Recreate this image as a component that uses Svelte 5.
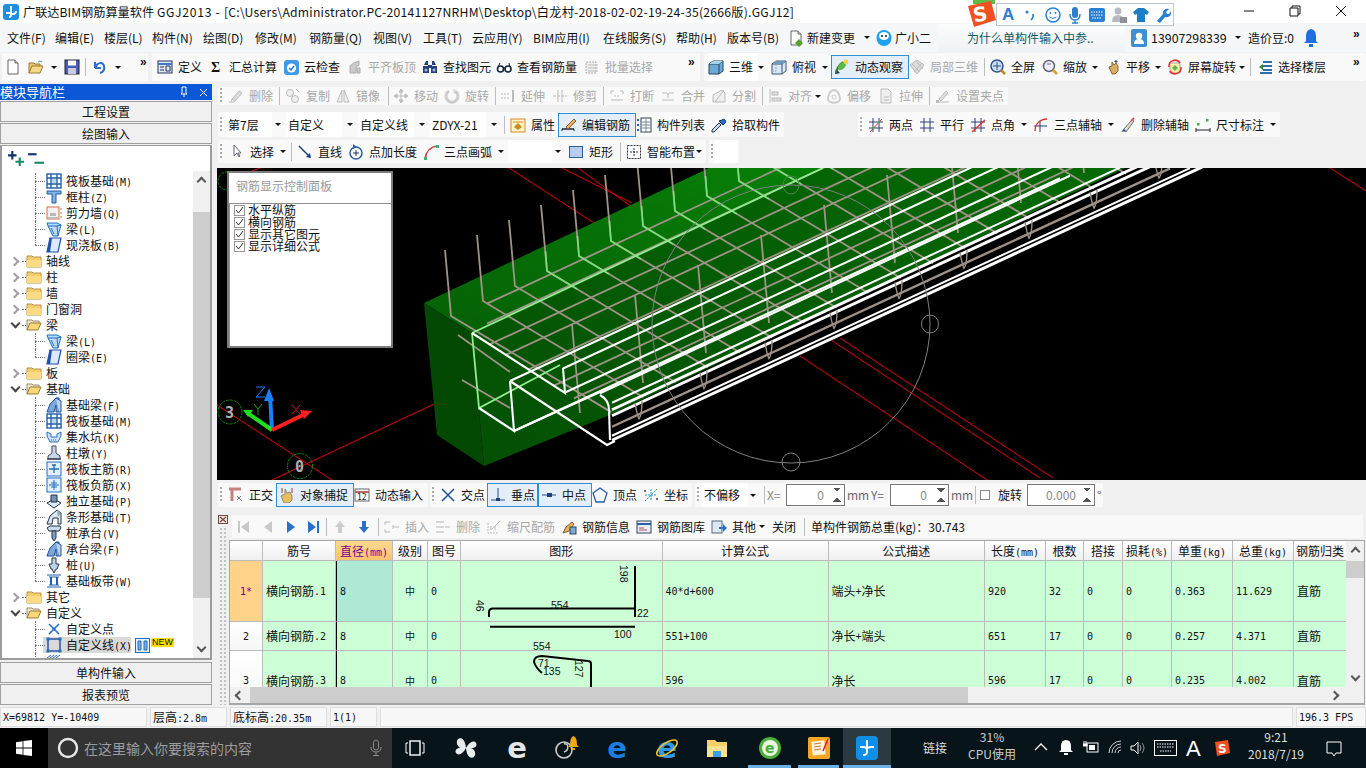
<script>
  const I = {
    new:'<path d="M3 1h7l3 3v11H3z" fill="#fff" stroke="#666"/><path d="M10 1v3h3" fill="#ddd" stroke="#666"/>',
    open:'<path d="M1 14V4h5l1 1h5v2" fill="#e8c46a" stroke="#9a7a30"/><path d="M1 14l3-7h11l-3 7z" fill="#f5d98a" stroke="#9a7a30"/><path d="M10 3q2-2 4 0" fill="none" stroke="#3a7"/>',
    save:'<rect x="1" y="1" width="14" height="14" fill="#4c5fb8" stroke="#223"/><rect x="4" y="1.5" width="8" height="5" fill="#fff"/><rect x="4" y="9" width="8" height="6" fill="#ccd"/>',
    undo:'<path d="M4 3v6M4 9h6M5 8c1-5 7-5 8-1s-1 6-4 7" fill="none" stroke="#2a6fc9" stroke-width="2"/>',
    def:'<rect x="1" y="2" width="14" height="12" fill="#dfe9f5" stroke="#235" /><path d="M1 5h14" stroke="#47c" stroke-width="2"/><path d="M3 8h4M3 11h4M9 7h4v5H9z" stroke="#235" fill="none"/>',
    sum:'<text x="3" y="13" font-size="14" font-weight="700" font-family="Liberation Serif" fill="#111">Σ</text>',
    cloud:'<rect x="1" y="1" width="15" height="15" rx="3" fill="#3d9ae8"/><circle cx="8.5" cy="9" r="4.6" fill="#fff"/><path d="M6 9l2 2 3-4" stroke="#2a7fd0" fill="none" stroke-width="1.5"/>',
    flush:'<path d="M3 14V7l4-3 5-2v4l-3 2v6zM10 9h3v5h-3z" fill="#ccc" stroke="#aaa"/>',
    find:'<path d="M2 6l2-4h2v4zM10 6V2h2l2 4zM1 7h6v7H1zM9 7h6v7H9zM6 6h4v3H6z" fill="#2b3f7a"/><circle cx="4" cy="11" r="1.5" fill="#9bd"/><circle cx="12" cy="11" r="1.5" fill="#9bd"/>',
    glass:'<circle cx="4.5" cy="10" r="3" fill="none" stroke="#123" stroke-width="1.6"/><circle cx="12" cy="10" r="3" fill="none" stroke="#123" stroke-width="1.6"/><path d="M7 9h2.5M2 8l2-4M14 8l-1-4" stroke="#123" fill="none"/>',
    batch:'<path d="M2 3h10v11H2z" fill="#eee" stroke="#aaa" stroke-dasharray="2 1"/><path d="M4 6h10M4 9h10M4 12h10" stroke="#bbb"/>',
    cube:'<path d="M1 5l4-3h10v10l-4 3H1z" fill="#6da9d8" stroke="#245"/><path d="M1 5h10v10M11 5l4-3" fill="none" stroke="#245"/><path d="M1 5h10l4-3H5z" fill="#a9d2ee"/>',
    wire:'<path d="M1 5l4-3h10v10l-4 3H1z" fill="#d6e8f5" stroke="#456"/><path d="M1 5h10v10M11 5l4-3" fill="none" stroke="#456"/><path d="M5 2v10H1" fill="none" stroke="#8ab" stroke-dasharray="2 1"/><path d="M1 5h10l4-3H5z" fill="#6a9cc4"/>',
    orbit:'<path d="M2 15C2 9 5 6 9 3" stroke="#2a7a2a" stroke-width="2" fill="none"/><ellipse cx="8" cy="7" rx="3" ry="5" transform="rotate(45 8 7)" fill="#5cb84a"/><circle cx="12" cy="3" r="2.4" fill="#f1d24a"/><path d="M2 15l4-1-3-3z" fill="#246"/>',
    loc3:'<path d="M8 1l7 5-7 9-7-9z" fill="#ddd" stroke="#bbb"/><path d="M3 5l8 8M7 2l7 8M13 4l-8 9" stroke="#bbb"/>',
    full:'<circle cx="7" cy="7" r="6" fill="#cfe0f5" stroke="#2d4f8f" stroke-width="1.5"/><path d="M7 3v8M3 7h8" stroke="#2d4f8f"/><path d="M11 11l4 4" stroke="#b98a20" stroke-width="2.5"/>',
    zoom:'<circle cx="7" cy="7" r="5.5" fill="#eef" stroke="#667" stroke-width="1.5"/><path d="M11 11l4 4" stroke="#d2a42a" stroke-width="2.5"/><path d="M5 5h4" stroke="#667"/>',
    pan:'<path d="M4 8l3-1V3l2 3 2-2 2 3v5l-3 3H7z" fill="#d9ad64" stroke="#8a6a30"/><path d="M11 1v3M9.5 2.5h3" stroke="#345"/>',
    srot:'<rect x="3" y="4" width="10" height="10" fill="#fbeda7" stroke="#aaa"/><path d="M5 9l3-3 3 3-3 3z" fill="#5cb84a"/><path d="M2 8a6 6 0 0 1 11-4M14 8a6 6 0 0 1-11 4" stroke="#d33" fill="none" stroke-width="1.5"/>',
    layers:'<path d="M2 8l4-3v6z" fill="#2a8a3a"/><path d="M6 3h9M6 7h9M6 11h9M3 14h12" stroke="#2c6fa5" stroke-width="2"/>',
    erase:'<path d="M4 11l7-8 3 2-7 8z" fill="#ddd" stroke="#bbb"/><path d="M1 14h6M4 11l-1 3" stroke="#bbb"/>',
    copy:'<circle cx="5" cy="5" r="3.5" fill="#eee" stroke="#bbb"/><circle cx="10" cy="11" r="3.5" fill="#eee" stroke="#bbb"/><path d="M11 1l3 3" stroke="#bbb"/>',
    mirror:'<path d="M7 2L2 14h5zM9 2l5 12H9z" fill="#eee" stroke="#bbb"/>',
    move:'<path d="M8 1v14M1 8h14M8 1L6 4h4zM8 15l-2-3h4zM1 8l3-2v4zM15 8l-3-2v4z" fill="#bbb" stroke="#bbb"/>',
    rot:'<path d="M5 3a6 6 0 1 0 6 0" fill="none" stroke="#ccc" stroke-width="3"/><path d="M10 1v4h4" fill="none" stroke="#ccc"/>',
    ext:'<path d="M1 6h9M1 10h9" stroke="#bbb" stroke-dasharray="2 1"/><path d="M13 2v12" stroke="#bbb" stroke-width="2"/>',
    trim:'<path d="M1 8h14" stroke="#bbb" stroke-dasharray="3 1"/><path d="M6 2v12M10 2v12" stroke="#bbb"/>',
    brk:'<path d="M2 3h3M11 3h3M2 3v3M14 3v3M2 12h12" stroke="#bbb" fill="none"/><path d="M5 8h6" stroke="#bbb" stroke-dasharray="2 1"/>',
    merge:'<path d="M2 5h5l1 2 1-2h5M2 12h12" stroke="#bbb" fill="none"/><path d="M8 7v3" stroke="#bbb"/>',
    split:'<path d="M2 14V7l9-5 3 3v9z" fill="#eee" stroke="#bbb"/><path d="M4 14l9-12" stroke="#bbb"/>',
    align:'<path d="M3 1v14" stroke="#bbb"/><rect x="5" y="4" width="6" height="3" fill="#ddd" stroke="#bbb"/><rect x="5" y="10" width="9" height="3" fill="#ddd" stroke="#bbb"/>',
    offs:'<path d="M2 11c0-5 3-9 6-9s6 4 6 9-12 5-12 0z" fill="none" stroke="#ccc" stroke-width="2"/><circle cx="8" cy="9" r="2" fill="none" stroke="#ccc"/>',
    str:'<path d="M3 1h7l3 3v11H3z" fill="#eee" stroke="#bbb"/><path d="M6 9h5M6 12h5" stroke="#bbb"/>',
    grip:'<path d="M2 14h12M4 11l7-8 2 2-7 8z" fill="#ddd" stroke="#bbb"/><rect x="1" y="12" width="3" height="3" fill="#bbb"/>',
    attr:'<rect x="1" y="2" width="14" height="13" fill="#fff3c8" stroke="#e08a20"/><path d="M4 10l4-4 4 4-4 3z" fill="#c98a20"/><path d="M3 5h10" stroke="#e08a20"/>',
    edit:'<path d="M1 12h12" stroke="#223" stroke-width="1.5"/><path d="M1 14v-2M13 14v-2" stroke="#223"/><path d="M5 10l8-8 2 2-8 8z" fill="#e8b64c" stroke="#855"/>',
    list:'<path d="M1 2h2v2H1zM1 7h2v2H1zM1 12h2v2H1z" fill="#2a5fa5"/><rect x="5" y="1" width="10" height="14" fill="#fff" stroke="#345"/><path d="M5 5h10M5 8h10M5 11h10M10 1v14" stroke="#789"/>',
    pick:'<path d="M3 15l-2 0 0-2 7-7 2 2z" fill="#cde" stroke="#236"/><path d="M8 4l4 4 2-2c2-2-1-5-3-3z" fill="#2a6fc9" stroke="#134"/>',
    two:'<path d="M1 5h14M1 11h14M5 1v14M11 1v14" stroke="#2d3f7a"/><path d="M2 15L14 2" stroke="#d33"/><circle cx="5" cy="11" r="1.2" fill="#4a4"/><circle cx="11" cy="5" r="1.2" fill="#4a4"/>',
    para:'<path d="M1 5h14M1 11h14M5 1v14M11 1v14" stroke="#2d3f7a"/>',
    ang:'<path d="M1 5h14M1 11h14M5 1v14M11 1v14" stroke="#2d3f7a"/><path d="M2 15L15 3" stroke="#d33" stroke-width="1.5"/>',
    arc3:'<path d="M1 9h13M7 4v11" stroke="#2d3f7a"/><path d="M2 14C2 7 7 2 14 2" fill="none" stroke="#d33" stroke-width="1.4"/>',
    delaux:'<path d="M3 13l9-10 2 1-8 11z" fill="#e8dcc4" stroke="#668"/><path d="M1 15l3-3 2 2z" fill="#2d4f8f"/><path d="M11 4l3-3" stroke="#e55" stroke-width="2"/>',
    dim:'<path d="M1 13h14M1 11v4M15 11v4" stroke="#223"/><rect x="2" y="6" width="2.5" height="2.5" fill="#4a4"/><rect x="11" y="2" width="2.5" height="2.5" fill="#4a4"/>',
    cursor:'<path d="M5 1v11l3-3 2 4 1-1-2-3h3z" fill="#fff" stroke="#667"/>',
    line:'<path d="M2 2l11 11" stroke="#1f3f80" stroke-width="1.5"/><path d="M14 14l-5-1 4-4z" fill="#1f3f80"/>',
    ptlen:'<circle cx="8" cy="9" r="6" fill="none" stroke="#2a5fa5" stroke-width="1.5"/><path d="M8 6v6M5 9h6" stroke="#235"/><path d="M5 0l4 3-4 2z" fill="#2a5fa5"/>',
    arc:'<path d="M2 15C3 8 7 3 14 2" fill="none" stroke="#c44" stroke-width="1.6"/><rect x="1" y="13" width="3" height="3" fill="#4a7"/><rect x="13" y="1" width="3" height="3" fill="#4a7"/>',
    rect:'<rect x="1.5" y="2.5" width="13" height="11" fill="#b5cdee" stroke="#2a5fa5"/>',
    smart:'<rect x="1.5" y="1.5" width="13" height="13" fill="#fff" stroke="#234" stroke-dasharray="2 1"/><path d="M8 4v8M4 8h8" stroke="#234" stroke-dasharray="2 1"/>',
    ortho:'<path d="M1 2h12M4 2v12" stroke="#c98080" stroke-width="3"/><path d="M9 9l5 5M13 9l-4 4" stroke="#778"/>',
    snap:'<path d="M2 9l4-2V2l2 4 3-1 2 4v4l-3 3H5z" fill="#e4c060" stroke="#987"/><path d="M3 1v5M13 1v5" stroke="#a33"/>',
    dyn:'<rect x="1" y="2" width="14" height="12" fill="#fff" stroke="#666"/><path d="M1 5h14" stroke="#b66" stroke-width="2"/><text x="3" y="13" font-size="8" font-family="DejaVu Sans Mono" fill="#222">12</text>',
    cross:'<path d="M2 2l12 12M14 2L2 14" stroke="#1f4f9f" stroke-width="1.5"/>',
    perp:'<path d="M1 13h14M8 1v12" stroke="#2d4f8f"/><rect x="6" y="11" width="4" height="3" fill="#1f3f80"/>',
    mid:'<path d="M1 8h14" stroke="#2d4f8f"/><rect x="6" y="6" width="5" height="4" fill="#1f3f80"/>',
    vert:'<path d="M8 1l7 5-3 9H4L1 6z" fill="#f4f8fe" stroke="#2a5fa5" stroke-width="1.3"/>',
    coord:'<path d="M8 2v12M2 8h12M2 14L14 2" stroke="#2a8fc4" stroke-dasharray="2 1"/><circle cx="2" cy="4" r="1" fill="#345"/><circle cx="14" cy="12" r="1" fill="#345"/>',
    first:'<path d="M3 2h2v12H3zM14 2v12L6 8z" fill="#c8c8c8"/>',
    prev:'<path d="M12 2v12L4 8z" fill="#c8c8c8"/>',
    next:'<path d="M4 2v12l8-6z" fill="#2a6fc9"/>',
    last:'<path d="M2 2v12l8-6zM11 2h2v12h-2z" fill="#2a6fc9"/>',
    up:'<path d="M8 2l5 6h-3v6H6V8H3z" fill="#ccc"/>',
    down:'<path d="M6 2h4v6h3l-5 6-5-6h3z" fill="#2a6fc9"/>',
    ins:'<path d="M1 3h5M1 13h5M1 3v3M1 10v3" stroke="#bbb" fill="none"/><path d="M9 8h6M9 6v4" stroke="#bbb"/>',
    dele:'<path d="M1 3h8M1 8h8M1 13h8" stroke="#ccc" stroke-width="1.5"/><path d="M10 8h5" stroke="#bbb"/>',
    scale:'<path d="M2 4v10h10" stroke="#bbb" fill="none" stroke-dasharray="2 1"/><path d="M5 11L14 2M5 7v4M9 7v4" stroke="#bbb"/>',
    info:'<path d="M2 14l3-6 6-5 2 2-5 7z" fill="#e8b64c" stroke="#855"/><rect x="9" y="8" width="6" height="7" fill="#7aa7dc" stroke="#345"/>',
    lib:'<rect x="1" y="2" width="14" height="12" fill="#e8eef8" stroke="#345"/><path d="M1 5h14" stroke="#2a5fa5" stroke-width="2"/><path d="M3 9h5M3 11h8" stroke="#a55"/>',
    other:'<rect x="1" y="2" width="10" height="12" fill="#dde8f5" stroke="#567"/><path d="M8 8h4V5l4 4-4 4v-3H8z" fill="#2a6fc9"/>',
    plus:'<path d="M5 1v8M1 5h8" stroke="#136" stroke-width="2"/><path d="M12 7v8M8 11h8" stroke="#1a8a6a" stroke-width="2"/>',
    minus:'<path d="M1 4h8" stroke="#136" stroke-width="2"/><path d="M7 12h9" stroke="#1a8a6a" stroke-width="2"/>',
    raft:'<rect x="1" y="1" width="14" height="14" fill="#fff" stroke="#1f5fae" stroke-width="1.4"/><path d="M1 5h14M1 11h14M5 1v14M11 1v14" stroke="#1f5fae" stroke-width="1.4"/><rect x="6" y="6" width="4" height="4" fill="#bcd4ee"/>',
    col:'<path d="M1 2h14v3H10v9H6V5H1z" fill="#7fb2e0" stroke="#1f5fae"/>',
    wall:'<rect x="1" y="2" width="12" height="12" fill="#f2f2f2" stroke="#d9703a"/><path d="M2 12h10v2H2zM4 8h6v3H4z" fill="#bbb"/><path d="M14 4h2M14 8h2M14 12h2" stroke="#d9703a"/>',
    beam:'<path d="M1 2h10l4 2-3 11H7L2 5z" fill="#bcd9f2" stroke="#1f6fbe"/><path d="M2 5h9l4-1M11 5l1 10M5 7l3 6" stroke="#1f6fbe" fill="none"/>',
    slab:'<path d="M4 1h11l-3 14H1z" fill="#dde9f7" stroke="#1f4faf" stroke-width="1.2"/><path d="M1 15l3-14 2 0-2 14z" fill="#1f4faf"/>',
    fbeam:'<path d="M1 15l3-8 6-6h3v14h-3V8l-2 7z" fill="#7ea6d8" stroke="#1f4f9f"/><path d="M10 1l5 3v11h-2" fill="#bcd4ee" stroke="#1f4f9f"/>',
    sump:'<path d="M1 3l4 2v3h6V5l4-2v4l-3 6H4L1 7z" fill="#cfe2f4" stroke="#2a6fc9"/><path d="M5 11h6" stroke="#2a6fc9" stroke-dasharray="1 1"/>',
    pier:'<path d="M6 1h4v7l4 3v3H2v-3l4-3z" fill="#c5d7ea" stroke="#445"/><path d="M1 14h14" stroke="#445" stroke-width="1.5"/>',
    rb1:'<rect x="1" y="1" width="14" height="14" fill="#e4effa" stroke="#1f6fbe"/><path d="M3 8h10M8 4v8M6 4h4" stroke="#1f6fbe" stroke-width="1.3"/>',
    rb2:'<rect x="1" y="1" width="14" height="14" fill="#e4effa" stroke="#1f6fbe"/><path d="M3 8h10M8 3v10M5 6h6M5 10h6" stroke="#1f6fbe"/>',
    iso:'<path d="M1 10l7-4 7 4-7 5z" fill="#dbe7f5" stroke="#234"/><path d="M5 2h6v7H5z" fill="#6f90b8" stroke="#234"/>',
    strip:'<path d="M1 15l3-8 7-6 4 3v11h-3V9H7l-1 6z" fill="#dbe7f5" stroke="#234"/><path d="M11 1l4 3-3 4z" fill="#8aa"/>',
    capb:'<path d="M1 3l3-2h10l1 2-2 3H3z" fill="#ccdcef" stroke="#234"/><path d="M6 6h4v7l-2 3-2-3z" fill="#7aa0cc" stroke="#234"/>',
    pile:'<path d="M6 1h4v6h3l-2 5h-1l-2 4-2-4H5L3 7h3z" fill="#bcd2ea" stroke="#234"/>',
    band:'<path d="M1 2h14M1 14h14M3 4h10M3 12h10" stroke="#1f5fae"/><path d="M5 4v8M11 4v8" stroke="#1f5fae" stroke-width="2"/>',
    cpt:'<path d="M3 3l10 10M13 3L3 13" stroke="#2a6fc9" stroke-width="1.6"/><circle cx="8" cy="8" r="1.6" fill="#2a6fc9"/>',
    cln:'<rect x="2" y="2" width="12" height="12" fill="none" stroke="#1f4f9f" stroke-width="1.4"/><rect x="0.5" y="0.5" width="3" height="3" fill="#1f6fbe"/><rect x="12.5" y="0.5" width="3" height="3" fill="#1f6fbe"/><rect x="0.5" y="12.5" width="3" height="3" fill="#1f6fbe"/><rect x="12.5" y="12.5" width="3" height="3" fill="#1f6fbe"/>',
    csf:'<path d="M1 5l4-3M4 5l4-3M7 5l4-3M10 5l4-3" stroke="#2a6fc9"/>',
    fclosed:'<path d="M1 3h5l1 1h8v10H1z" fill="#f7cf68" stroke="#b08e52"/><path d="M1 7h14v7H1z" fill="#fbdc85"/>',
    fopen:'<path d="M1 13V3h5l1 1h6v2" fill="#efe7d2" stroke="#9a8a6a"/><path d="M1 13l3-7h11l-3 7z" fill="#f8d67a" stroke="#9a7a30"/>'
  };
  const it = (x, ic, t, o = {}) => ({ k: 'it', x, ic, t, ...o });
  const tx = (x, t, o = {}) => ({ k: 'tx', x, t, ...o });
  const sp = (x) => ({ k: 'sep', x });
  const ca = (x) => ({ k: 'ca', x });
  const dt = (x) => ({ k: 'dt', x });
  const mo = (x) => ({ k: 'mo', x });
  const cb = (x, t, w, o = {}) => ({ k: 'cb', x, t, w, ...o });

  function layout(org, groups) {
    let prev = org;
    return groups.map((g) => {
      const r = { ml: g[0] - prev, w: g[1] - g[0], plain: g[3], items: g[2].map((e, i, a) => ({ ...e, ml: i === 0 ? e.x - g[0] : 0, iw: (i + 1 < a.length ? a[i + 1].x : g[1]) - e.x })) };
      prev = g[1];
      return r;
    });
  }

  const rowMain = layout(0, [
    [2, 148, [it(5, 'new'), it(28, 'open'), ca(51), it(64, 'save'), sp(85), it(91, 'undo'), ca(115), mo(140)]],
    [152, 700, [it(157, 'def', '定义'), it(208, 'sum', '汇总计算'), it(283, 'cloud', '云检查'), it(347, 'flush', '平齐板顶', { d: 1 }), it(422, 'find', '查找图元'), it(496, 'glass', '查看钢筋量'), it(584, 'batch', '批量选择', { d: 1 }), mo(688)]],
    [704, 1366, [it(708, 'cube', '三维', { wh: 1 }), ca(758), it(771, 'wire', '俯视'), ca(822), it(831, 'orbit', '动态观察', { on: 1 }), it(909, 'loc3', '局部三维', { d: 1 }), sp(984), it(990, 'full', '全屏'), it(1042, 'zoom', '缩放'), ca(1092), it(1105, 'pan', '平移'), ca(1155), it(1167, 'srot', '屏幕旋转'), ca(1239), sp(1250), it(1257, 'layers', '选择楼层'), mo(1353)]]
  ]);
  const rowEdit = layout(217, [
    [218, 1008, [dt(220), it(228, 'erase', '删除', { d: 1 }), sp(279), it(285, 'copy', '复制', { d: 1 }), it(335, 'mirror', '镜像', { d: 1 }), sp(388), it(393, 'move', '移动', { d: 1 }), it(444, 'rot', '旋转', { d: 1 }), sp(495), it(500, 'ext', '延伸', { d: 1 }), it(552, 'trim', '修剪', { d: 1 }), sp(603), it(609, 'brk', '打断', { d: 1 }), it(660, 'merge', '合并', { d: 1 }), it(711, 'split', '分割', { d: 1 }), sp(762), it(767, 'align', '对齐', { d: 1 }), ca(815), it(826, 'offs', '偏移', { d: 1 }), it(878, 'str', '拉伸', { d: 1 }), sp(929), it(935, 'grip', '设置夹点', { d: 1 })]]
  ]);
  const rowAttr = layout(217, [
    [218, 784, [dt(220), cb(226, '第7层', 46), ca(275), cb(286, '自定义', 56), ca(347), cb(358, '自定义线', 56), ca(419), cb(430, 'ZDYX-21', 56), ca(491), sp(504), it(510, 'attr', '属性'), it(558, 'edit', '编辑钢筋', { on: 1 }), it(636, 'list', '构件列表'), it(711, 'pick', '拾取构件')]],
    [858, 1280, [dt(860), it(868, 'two', '两点'), it(919, 'para', '平行'), it(970, 'ang', '点角'), ca(1021), it(1033, 'arc3', '三点辅轴'), ca(1108), it(1120, 'delaux', '删除辅轴'), it(1195, 'dim', '尺寸标注'), ca(1270)]]
  ]);
  const rowDraw = layout(217, [
    [218, 706, [dt(220), it(229, 'cursor', '选择'), ca(280), sp(291), it(297, 'line', '直线'), it(348, 'ptlen', '点加长度'), it(423, 'arc', '三点画弧'), ca(498), cb(508, '', 44), ca(555), it(568, 'rect', '矩形'), sp(620), it(626, 'smart', '智能布置'), ca(696)]],
    [709, 739, [dt(711), cb(715, '', 22)]]
  ]);
  const rowSnap = layout(217, [
    [218, 428, [dt(220), it(228, 'ortho', '正交'), it(276, 'snap', '对象捕捉', { on: 1 }), it(354, 'dyn', '动态输入')]],
    [430, 692, [dt(432), it(440, 'cross', '交点'), it(487, 'perp', '垂点', { on: 1 }), it(538, 'mid', '中点', { on: 1 }), it(592, 'vert', '顶点'), it(643, 'coord', '坐标')]]
  ]);
  const rowTbl = layout(217, [
    [232, 1363, [it(235, 'first', ''), it(260, 'prev', ''), it(283, 'next', ''), it(306, 'last', ''), sp(326), it(332, 'up', ''), it(356, 'down', ''), sp(378), it(384, 'ins', '插入', { d: 1 }), it(435, 'dele', '删除', { d: 1 }), it(486, 'scale', '缩尺配筋', { d: 1 }), it(561, 'info', '钢筋信息'), it(636, 'lib', '钢筋图库'), it(711, 'other', '其他'), ca(759), tx(772, '关闭'), sp(804), tx(811, '单构件钢筋总重(kg)：30.743')]]
  ]);

  const runs = (s) => (s.match(/[\x00-\x7f]+|[^\x00-\x7f]+/g) || []).map((t) => ({ t, a: /^[\x00-\x7f]/.test(t) }));

  const tree = [
    [2, 'raft', '筏板基础(M)', 'l'], [2, 'col', '框柱(Z)', 'l'], [2, 'wall', '剪力墙(Q)', 'l'], [2, 'beam', '梁(L)', 'l'], [2, 'slab', '现浇板(B)', 'e'],
    [1, 'fclosed', '轴线'], [1, 'fclosed', '柱'], [1, 'fclosed', '墙'], [1, 'fclosed', '门窗洞'], [1, 'fopen', '梁', 'o'],
    [2, 'beam', '梁(L)', 'l'], [2, 'slab', '圈梁(E)', 'e'], [1, 'fclosed', '板'], [1, 'fopen', '基础', 'o'],
    [2, 'fbeam', '基础梁(F)', 'l'], [2, 'raft', '筏板基础(M)', 'l'], [2, 'sump', '集水坑(K)', 'l'], [2, 'pier', '柱墩(Y)', 'l'], [2, 'rb1', '筏板主筋(R)', 'l'], [2, 'rb2', '筏板负筋(X)', 'l'], [2, 'iso', '独立基础(P)', 'l'], [2, 'strip', '条形基础(T)', 'l'], [2, 'capb', '桩承台(V)', 'l'], [2, 'fbeam', '承台梁(F)', 'l'], [2, 'pile', '桩(U)', 'l'], [2, 'band', '基础板带(W)', 'e'],
    [1, 'fclosed', '其它'], [1, 'fopen', '自定义', 'o'], [2, 'cpt', '自定义点', 'l'], [2, 'cln', '自定义线(X)', 'l', 1], [2, 'csf', '', 'l']
  ];

  const head = ['', '筋号', '直径(mm)', '级别', '图号', '图形', '计算公式', '公式描述', '长度(mm)', '根数', '搭接', '损耗(%)', '单重(kg)', '总重(kg)', '钢筋归类'];
  const rows = [
    { cls: 'r1', c: ['1*', '横向钢筋.1', '8', '中', '0', '', '40*d+600', '端头+净长', '920', '32', '0', '0', '0.363', '11.629', '直筋'] },
    { cls: 'r2', c: ['2', '横向钢筋.2', '8', '中', '0', '', '551+100', '净长+端头', '651', '17', '0', '0', '0.257', '4.371', '直筋'] },
    { cls: 'r3', c: ['3', '横向钢筋.3', '8', '中', '0', '', '596', '净长', '596', '17', '0', '0', '0.235', '4.002', '直筋'] }
  ];

  const B = (x, y700) => y700 - 0.463 * (x - 700);
  const greyDiag = [];
  const litHook = [];
  for (let i = 0; i < 30; i++) {
    const sx = 445 + i * 32, sy = 250 - i * 15;
    const bx = sx + 6, by = sy + 66;
    const ex = (371 + 0.463 * 700 - by + 0.6 * bx) / 1.063;
    const ey = by + 0.6 * (ex - bx);
    greyDiag.push(`${sx},${sy} ${bx},${by} ${ex},${ey}`);
    if (i >= 3 && i < 13) litHook.push(`${bx - 1.5},${by - 20} ${bx},${by} ${bx + 30},${by + 18}`);
  }
  const greyVert = [];
  for (let i = 0; i < 9; i++) {
    const sx = 572 + i * 63, sy = 325 - i * 30;
    greyVert.push(`${sx},${sy} ${sx + 8},${sy + 88}`);
  }
  const greyLong = [205, 225, 247, 265, 290, 318, 340].map((y) => {
    const x0 = Math.max(487, (y + 324 - 333 + 302) / 1.103);
    return `${x0},${B(x0, y)} 1200,${B(1200, y)}`;
  });
  const loops = [];
  for (let i = 0; i < 9; i++) {
    const x = 640 + i * 65, y = B(x, 389);
    loops.push(`M${x - 5} ${y - 14}q2 12 4 16q3 -4 3 -18`);
  }
  const whiteLong = [[563, 305, 1010], [565, 330, 1060], [510, 293, 980], [514, 344.9, 1060], [600, 347, 1070]].map(([a, y, b]) => `${a},${B(a, y)} ${b},${B(b, y)}`);
</script>

{#snippet icon(n, s = 16)}
  <svg class="ico" width={s} height={s} viewBox="0 0 16 16">{@html I[n]}</svg>
{/snippet}

{#snippet bar(groups, cls)}
  <div class="row {cls}">
    {#each groups as g}
      <div class="grp" style="margin-left:{g.ml}px;width:{g.w}px">
        {#each g.items as e}
          {#if e.k === 'it'}
            <div class="it" class:dim={e.d} class:on={e.on} class:wh={e.wh} style="margin-left:{e.ml}px;width:{e.iw}px">{@render icon(e.ic)}{#if e.t}<span class="lb">{e.t}</span>{/if}</div>
          {:else if e.k === 'tx'}
            <div class="it" style="margin-left:{e.ml}px;width:{e.iw}px"><span class="lb0">{e.t}</span></div>
          {:else if e.k === 'sep'}
            <div class="slot" style="width:{e.iw}px"><i class="sep"></i></div>
          {:else if e.k === 'ca'}
            <div class="slot" style="width:{e.iw}px"><i class="car"></i></div>
          {:else if e.k === 'dt'}
            <div class="slot" style="margin-left:{e.ml}px;width:{e.iw}px"><i class="dots"></i></div>
          {:else if e.k === 'mo'}
            <div class="slot more" style="width:{e.iw}px">»</div>
          {:else if e.k === 'cb'}
            <div class="slot" style="width:{e.iw}px"><span class="combo" style="width:{e.w}px">{e.t}</span></div>
          {/if}
        {/each}
      </div>
    {/each}
  </div>
{/snippet}

{#snippet txt(s)}
  {#each runs(s) as r}<span class:a={r.a}>{r.t}</span>{/each}
{/snippet}

<div class="app">
  <header class="title">
    <svg class="appico" width="16" height="16" viewBox="0 0 16 16"><rect width="16" height="16" rx="3" fill="#1c8fe0"/><path d="M8 2v6M3 9h3a2 2 0 0 0 2-1v3a2 2 0 0 1-2 2M13 7a3 3 0 0 1-3 3H8" fill="none" stroke="#fff" stroke-width="1.8"/></svg>
    <span class="ttext">广联达BIM钢筋算量软件 <span class="t2">GGJ2013 -&nbsp;</span><span class="t3">[C:\Users\Administrator.PC-20141127NRHM\Desktop\白龙村-2018-02-02-19-24-35(2666版).GGJ12]</span></span>
    <div class="winbtns">
      <svg width="12" height="12" viewBox="0 0 12 12"><path d="M1 6h10" stroke="#111"/></svg>
      <svg width="12" height="12" viewBox="0 0 12 12"><path d="M3 3V1h8v8H9M1 3h8v8H1z" fill="none" stroke="#111"/></svg>
      <svg width="12" height="12" viewBox="0 0 12 12"><path d="M1 1l10 10M11 1L1 11" stroke="#111"/></svg>
    </div>
  </header>

  <div class="ime">
    <svg class="ime-s" width="28" height="27" viewBox="0 0 28 27"><rect x="5" y="-2" width="22" height="6" fill="#5dbb4a"/><path d="M0 6l23-5 5 19-22 7z" fill="#f1501f"/><text x="5" y="21" font-size="20" font-weight="700" font-family="DejaVu Sans" fill="#fff" transform="rotate(-8 14 14)">S</text></svg>
    <div class="ime-bar">
      <span class="ime-a">A</span>
      <svg class="ime-dot" width="12" height="16" viewBox="0 0 12 16"><circle cx="3" cy="5" r="1.5" fill="#2a7fd0"/><path d="M9 7c1 3-1 5-2 6" stroke="#2a7fd0" stroke-width="1.6" fill="none"/></svg>
      <svg class="ime-smile" width="16" height="16" viewBox="0 0 16 16"><circle cx="8" cy="8" r="7" fill="#fff" stroke="#2a7fd0" stroke-width="1.5"/><circle cx="5.5" cy="6" r="1" fill="#2a7fd0"/><circle cx="10.5" cy="6" r="1" fill="#2a7fd0"/><path d="M4.5 10q3.5 3 7 0" stroke="#2a7fd0" fill="none"/></svg>
      <svg width="16" height="18" viewBox="0 0 16 18"><rect x="5" y="1" width="6" height="11" rx="3" fill="#2a7fd0"/><path d="M3 8q0 6 5 6t5-6M8 14v3M5 17h6" stroke="#2a7fd0" fill="none" stroke-width="1.4"/></svg>
      <svg width="16" height="14" viewBox="0 0 16 14"><rect width="16" height="14" rx="2" fill="#2a7fd0"/><path d="M2 4h12M2 7h12M3 10h10" stroke="#fff" stroke-dasharray="1.5 1"/></svg>
      <svg width="16" height="18" viewBox="0 0 16 18"><circle cx="7" cy="5" r="3.5" fill="#b8bcc2"/><path d="M1 16q0-7 6-7t6 7z" fill="#b8bcc2"/><rect x="9" y="11" width="7" height="6" fill="#8d9198"/></svg>
      <svg width="16" height="16" viewBox="0 0 16 16"><path d="M5 1h6l5 4-2 3-2-1v8H4V7L2 8 0 5z" fill="#1c7fc4"/></svg>
      <svg width="16" height="16" viewBox="0 0 16 16"><path d="M2 14l6-7c-1-3 2-6 6-5l-3 3 1 2 2 0 2-3c1 4-2 7-6 6l-5 6z" fill="#2a7fd0"/></svg>
    </div>
  </div>

  <nav class="menu">
    <span class="m w48">文件(F)</span><span class="m w49">编辑(E)</span><span class="m w48">楼层(L)</span><span class="m w51">构件(N)</span><span class="m w52">绘图(D)</span><span class="m w54">修改(M)</span><span class="m w64">钢筋量(Q)</span><span class="m w50">视图(V)</span><span class="m w49">工具(T)</span><span class="m w61">云应用(Y)</span><span class="m w70">BIM应用(I)</span><span class="m w73">在线服务(S)</span><span class="m w51">帮助(H)</span><span class="m w61">版本号(B)</span>
    <span class="mico">{@render icon('new')}<svg class="gem" width="8" height="8" viewBox="0 0 8 8"><path d="M4 0l4 4-4 4-4-4z" fill="#5aa02c"/></svg></span><span class="m w57">新建变更</span><i class="car mcar"></i>
    <svg class="qq" width="16" height="18" viewBox="0 0 16 18"><ellipse cx="8" cy="9" rx="7.5" ry="8" fill="#1ea1ee"/><ellipse cx="8" cy="7" rx="5" ry="4" fill="#fff"/><circle cx="6" cy="7" r="1" fill="#123"/><circle cx="10" cy="7" r="1" fill="#123"/></svg>
    <span class="m w43">广小二</span>
    <span class="qbox">为什么单构件输入中参..</span>
    <svg class="uico" width="16" height="18" viewBox="0 0 16 18"><rect width="16" height="18" rx="2" fill="#3d8fd0"/><circle cx="8" cy="7" r="3.2" fill="#fff"/><path d="M3 15q0-5 5-5t5 5z" fill="#fff"/></svg>
    <span class="phone">13907298339</span><i class="car pcar"></i><span class="bean">造价豆:0</span>
    <svg class="bell" width="14" height="20" viewBox="0 0 14 20"><path d="M7 1q5 1 5 7v5l2 2H0l2-2V8q0-6 5-7zM5 16h4v3H5z" fill="#1f6fe0"/></svg>
    <span class="more mmore">»</span>
  </nav>

  {@render bar(rowMain, 'r-main')}

  <div class="body">
    <aside class="left">
      <div class="lhead"><span>模块导航栏</span><span class="pin"><svg width="10" height="12" viewBox="0 0 10 12"><path d="M3 1h4v6l1 1H2l1-1zM5 8v3" fill="none" stroke="#fff"/></svg><svg width="9" height="9" viewBox="0 0 9 9"><path d="M1 1l7 7M8 1L1 8" stroke="#fff"/></svg></span></div>
      <div class="lbtn">工程设置</div>
      <div class="lbtn">绘图输入</div>
      <div class="tree">
        <div class="tools">{@render icon('plus', 17)}{@render icon('minus', 17)}</div>
        <div class="tscroll">
          <div class="tlist">
            {#each tree as n}
              <div class="tr l{n[0]}" class:open={n[3] === 'o'} class:selrow={n[4]}>
                {#if n[0] === 1}
                  <i class="chev" class:down={n[3] === 'o'}></i><i class="hd"></i>
                {:else}
                  <i class="vl" class:end={n[3] === 'e'}></i><i class="hd"></i>
                {/if}
                {@render icon(n[1])}
                <span class="tl">{@render txt(n[2])}</span>
                {#if n[4]}
                  <svg class="nb" width="15" height="15" viewBox="0 0 15 15"><rect x=".5" y=".5" width="14" height="14" fill="#e8f2fb" stroke="#1f6fbe"/><path d="M3 3h3v9H3zM9 3h3v9H9z" fill="#7aaee0" stroke="#1f6fbe"/></svg>
                  <span class="newtag">NEW</span>
                {/if}
              </div>
            {/each}
          </div>
          <div class="vs"><i class="up"></i><div class="vthumb"></div><i class="dn"></i></div>
        </div>
      </div>
      <div class="lbtn b1">单构件输入</div>
      <div class="lbtn">报表预览</div>
    </aside>

    <main class="right">
      {@render bar(rowEdit, 'r-edit')}
      {@render bar(rowAttr, 'r-attr')}
      {@render bar(rowDraw, 'r-draw')}

      <section class="view">
        <svg class="scene" width="1149" height="312" viewBox="217 168 1149 312">
          <defs>
            <linearGradient id="gt" x1="0" y1="1" x2="1" y2="0"><stop offset="0" stop-color="#056005"/><stop offset="1" stop-color="#078007"/></linearGradient>
            <linearGradient id="gs" x1="0" y1="1" x2="1" y2="0"><stop offset="0" stop-color="#044f04"/><stop offset="1" stop-color="#056a05"/></linearGradient>
          </defs>
          <g stroke="#e00000" stroke-width="1">
            <path d="M227 181L260 168M509 168L594 223M562 168L632 203M578 168L640 213M217 405L332 480M272 480L434 404M840 338L1053 478M828 338L1040 478M800 356L987 480M1330 168L1366 191"/>
          </g>
          <polygon points="424,303 709,168 823,168 472,333" fill="url(#gt)"/>
          <polygon points="424,303 472,333 484,466 437,435" fill="#034803"/>
          <polygon points="484,466 472,333 823,168 1125,168 610,415" fill="url(#gs)"/>
          <g fill="none" stroke="#a09488" stroke-width="1.8">
            {#each greyLong as p}<polyline points={p}/>{/each}
            {#each greyDiag as p}<polyline points={p}/>{/each}
            {#each greyVert as p}<polyline points={p}/>{/each}
            <path d="M458 335L510 372M462 380L510 408"/>
          </g>
          <g fill="none" stroke="#7ddc7d" stroke-width="1.6">
            {#each litHook as p}<polyline points={p}/>{/each}
          </g>
          <polygon points="612,416.700 1149,168 1202,168 612,443" fill="#000"/>
          <g fill="none" stroke="#8fee8f" stroke-width="1.8">
            <path d="M472 333L823 168M472 333L479 408L560 365"/>
          </g>
          <g fill="none" stroke="#fff" stroke-width="2.1">
            <path d="M472 333L565 393L563 368M510 381L514 431L479 408M510 381L607 445L615 441M514 431L600 392M600 395Q609 400 609 410L610 440"/>
            {#each whiteLong as p}<polyline points={p}/>{/each}
          </g>
          <g fill="none">
            <path d="M612 {B(612,369)}L1138 {B(1138,369)}M612 {B(612,375)}L1150 {B(1150,375)}" stroke="#fff" stroke-width="3"/>
            <path d="M612 {B(612,362)}L1120 {B(1120,362)}" stroke="#fff" stroke-width="2"/>
            <path d="M612 {B(612,386)}L1170 {B(1170,386)}" stroke="#9c9088" stroke-width="2.4"/>
            <path d="M612 {B(612,395)}L1190 {B(1190,395)}" stroke="#fff" stroke-width="2"/>
            <path d="M612 {B(612,399.500)}L1202 {B(1202,399.500)}" stroke="#fff" stroke-width="3"/>
            {#each loops as p}<path d={p} stroke="#9c9088" stroke-width="1.4"/>{/each}
          </g>
          <g fill="none" stroke="#808080" stroke-width="1">
            <circle cx="791" cy="324" r="139"/>
            <ellipse cx="930" cy="324" rx="8.500" ry="9"/>
            <ellipse cx="791" cy="462" rx="9" ry="9"/>
            <ellipse cx="791" cy="185" rx="8" ry="9" stroke="#4a8a4a"/>
          </g>
          <g fill="none" stroke="#0a8a0a" stroke-dasharray="3 1">
            <circle cx="230" cy="412" r="12"/>
            <circle cx="300" cy="466" r="12.500"/>
            <circle cx="227" cy="181" r="9"/>
          </g>
          <text x="225" y="418" class="bub">3</text>
          <text x="295" y="472" class="bub">0</text>
          <path d="M272 430L270 395" stroke="#1a80ff" stroke-width="4"/><path d="M269 388l-5 13h10z" fill="#1a80ff"/>
          <path d="M272 430L249 414" stroke="#1fe01f" stroke-width="4"/><path d="M243 410l10 0-5 7z" fill="#1fe01f"/>
          <path d="M272 430L303 415" stroke="#ff2020" stroke-width="4"/><path d="M312 411l-12 -1 4 9z" fill="#ff2020"/>
          <path d="M256 387h9l-9 10h9" fill="none" stroke="#1a80ff"/>
          <path d="M254 404l4 5 4-5M258 409v6" fill="none" stroke="#19a019"/>
          <path d="M292 405l8 9M300 405l-8 9" fill="none" stroke="#c11"/>
        </svg>
        <div class="ctrl">
          <div class="ctitle">钢筋显示控制面板</div>
          <div class="cbox">
            {#each ['水平纵筋', '横向钢筋', '显示其它图元', '显示详细公式'] as t}
              <div class="cr"><i class="ck"><svg width="11" height="11" viewBox="0 0 11 11"><path d="M2 5l2.5 3L9 2" fill="none" stroke="#333"/></svg></i><span>{t}</span></div>
            {/each}
          </div>
        </div>
      </section>

      <div class="row r-snap">
        {#each rowSnap as g}
          <div class="grp" style="margin-left:{g.ml}px;width:{g.w}px">
            {#each g.items as e}
              {#if e.k === 'it'}
                <div class="it" class:on={e.on} style="margin-left:{e.ml}px;width:{e.iw}px">{@render icon(e.ic)}<span class="lb">{e.t}</span></div>
              {:else}
                <div class="slot" style="margin-left:{e.ml}px;width:{e.iw}px"><i class="dots"></i></div>
              {/if}
            {/each}
          </div>
        {/each}
        <div class="grp g3">
          <i class="dots d3"></i>
          <span class="combo c3">不偏移</span><i class="car c3c"></i><i class="sep s3"></i>
          <span class="lab dimt">X=</span>
          <div class="num n1"><span>0</span><i class="spin"></i></div>
          <span class="lab unit">mm</span><span class="lab unit2">Y=</span>
          <div class="num n2"><span>0</span><i class="spin"></i></div>
          <span class="lab unit">mm</span><i class="sep s4"></i><i class="chk"></i><span class="rotl">旋转</span>
          <div class="num n3"><span>0.000</span><i class="spin"></i></div>
          <span class="deg">°</span>
        </div>
      </div>

      <div class="lower">
        <div class="gutter">
          <svg width="10" height="9" viewBox="0 0 10 9"><rect x=".5" y=".5" width="9" height="8" fill="#f6e6e6" stroke="#744"/><path d="M2 2l6 5M8 2L2 7" stroke="#744" stroke-width="1.2"/></svg>
          <i class="gdots"></i>
        </div>
        <div class="lmain">
          {@render bar(rowTbl, 'r-tbl')}
          <div class="tbl">
            <div class="grid-wrap">
              <div class="grid hd">
                {#each head as h, i}<div class="hc" class:hs={i === 2}>{@render txt(h)}</div>{/each}
              </div>
              {#each rows as r}
                <div class="grid {r.cls}">
                  {#each r.c as c, i}
                    <div class="td" class:sel={r.cls === 'r1' && i === 2} class:rh={i === 0} class:rha={i === 0 && r.cls === 'r1'} class:fc={i === 2} class:ct={i === 3}>{@render txt(c)}</div>
                  {/each}
                </div>
              {/each}
              <svg class="shape" width="200" height="146" viewBox="462 541 200 146">
                <g fill="none" stroke="#000" stroke-width="2">
                  <path d="M635 566V617M635 608.500H493Q489 608.500 489 612V617M490 626.700H635"/>
                  <path d="M591 687V664Q591 661 588 661L542 656Q534 656 534 662Q536 668 542 673"/>
                </g>
                <g class="sh">
                  <text x="551" y="609">554</text>
                  <text x="637" y="617">22</text>
                  <text x="614" y="638">100</text>
                  <text transform="translate(620 565) rotate(90)">198</text>
                  <text transform="translate(476 600) rotate(90)">46</text>
                  <text x="533" y="650" fill="#14505a">554</text>
                  <text x="538" y="667" fill="#14505a">71</text>
                  <text x="543" y="675" fill="#14505a">135</text>
                  <text transform="translate(575 660) rotate(90)" fill="#14505a">127</text>
                </g>
              </svg>
            </div>
            <div class="tvs"><i class="up"></i><div class="tthumb"></div><i class="dn"></i></div>
            <div class="ths"><i class="lf"></i><div class="hthumb"></div><i class="rt"></i></div>
          </div>
        </div>
      </div>
    </main>
  </div>

  <footer class="status">
    <div class="st s1">{@render txt('X=69812 Y=-10409')}</div>
    <div class="st s2">{@render txt('层高:2.8m')}</div>
    <div class="st s3x">{@render txt('底标高:20.35m')}</div>
    <div class="st s4x">{@render txt('1(1)')}</div>
    <div class="st s5"></div>
    <div class="st s6">{@render txt('196.3 FPS')}</div>
  </footer>

  <div class="task">
    <div class="start"><svg width="16" height="16" viewBox="0 0 16 16"><path d="M0 2.2l6.6-1v6.4H0zM7.4 1.1L16 0v7.6H7.4zM0 8.4h6.6v6.4l-6.6-1zM7.4 8.4H16V16l-8.6-1.1z" fill="#fff"/></svg></div>
    <div class="search">
      <svg width="22" height="22" viewBox="0 0 22 22"><circle cx="11" cy="11" r="9" fill="none" stroke="#e8e8e8" stroke-width="2.4"/></svg>
      <span>在这里输入你要搜索的内容</span>
      <svg class="mic" width="12" height="18" viewBox="0 0 12 18"><rect x="3.5" y="1" width="5" height="10" rx="2.5" fill="none" stroke="#8a8a8a"/><path d="M1 8q0 5 5 5t5-5M6 13v3M3 16.5h6" fill="none" stroke="#8a8a8a"/></svg>
    </div>
    <div class="tasks">
      <div class="tk k1"><svg width="20" height="16" viewBox="0 0 20 16"><rect x="5" y="1" width="10" height="14" fill="none" stroke="#fff" stroke-width="1.4"/><path d="M3 3H1v10h2M17 3h2v10h-2" fill="none" stroke="#fff"/></svg></div>
      <div class="tk k2"><svg width="22" height="24" viewBox="0 0 22 24"><path d="M11 12C4 13 1 9 2 5s8-5 9 7zM11 12c7-1 10 3 9 7s-8 5-9-7zM11 12c-3 6-8 8-10 5s2-7 10-5zM11 12c3-6 8-8 10-5s-2 7-10 5z" fill="#e8ecec"/></svg></div>
      <div class="tk k3"><span class="eico">e</span></div>
      <div class="tk k4"><svg width="28" height="28" viewBox="0 0 28 28"><circle cx="11" cy="16" r="8" fill="none" stroke="#ccc" stroke-width="1.6"/><path d="M11 10c4-2 6 6 0 8" fill="none" stroke="#ccc" stroke-width="1.4"/><path d="M17 11q0-8 3.500-9Q24 3 24 11l2 2H15zM19 14h3v2h-3z" fill="#f0a818"/></svg></div>
      <div class="tk k5"><span class="eico edge">e</span></div>
      <div class="tk k6"><span class="eico ie">e</span><svg class="ring" width="26" height="26" viewBox="0 0 26 26"><ellipse cx="13" cy="13" rx="12" ry="5" transform="rotate(-35 13 13)" fill="none" stroke="#f0c020" stroke-width="1.6"/></svg></div>
      <div class="tk k7"><svg width="22" height="22" viewBox="0 0 22 22"><path d="M1 3h8l2 2h10v15H1z" fill="#f7cf68"/><path d="M1 9h20v11H1z" fill="#fbe08f"/><path d="M7 20v-6h8v6" fill="#3aa0e0"/></svg></div>
      <div class="tk k8 ul"><svg width="24" height="28" viewBox="0 0 24 28"><circle cx="12" cy="14" r="11" fill="#4fae3a"/><circle cx="12" cy="14" r="8" fill="#e8f6e0"/><text x="7" y="19" font-size="14" font-weight="700" fill="#4fae3a" font-family="DejaVu Sans">e</text></svg></div>
      <div class="tk k9 ul"><svg width="24" height="26" viewBox="0 0 24 26"><rect x="1" y="2" width="22" height="22" rx="2" fill="#f5a623"/><rect x="5" y="6" width="13" height="14" fill="#fdf3d6" transform="rotate(-6 11 13)"/><path d="M7 9l7-1M7 12l7-1M7 15l7-1" stroke="#b9813a"/><path d="M16 16l5-12" stroke="#d14" stroke-width="1.4"/></svg></div>
      <div class="tk k10 ul act"><svg width="22" height="24" viewBox="0 0 22 24"><rect width="22" height="24" rx="4" fill="#0e8fe8"/><path d="M11 4v9M4 11h3c3 0 4 1 4 3v2c0 2-1 3-4 3M18 11h-3c-2 0-4 1-4 2" fill="none" stroke="#fff" stroke-width="2"/></svg></div>
    </div>
    <div class="tray">
      <span class="tz1">链接</span>
      <div class="cpu"><span>31%</span><span>CPU使用</span></div>
      <svg class="tz2" width="14" height="10" viewBox="0 0 14 10"><path d="M1 8l6-6 6 6" fill="none" stroke="#fff" stroke-width="1.3"/></svg>
      <svg class="tz3" width="14" height="16" viewBox="0 0 14 16"><path d="M7 1q5 0 5 6v4l2 2H0l2-2V7q0-6 5-6zM5 14h4v2H5z" fill="#fff"/></svg>
      <svg class="tz4" width="16" height="14" viewBox="0 0 16 14"><rect x="4" y="3" width="11" height="9" fill="none" stroke="#fff"/><rect x="6" y="5" width="6" height="5" fill="#fff"/><path d="M1 1v3M3 1v3M0 4h4v2H0z" fill="#fff" stroke="#fff"/></svg>
      <svg class="tz5" width="18" height="14" viewBox="0 0 18 14"><path d="M1 13A12 12 0 0 1 13 1M4 13a9 9 0 0 1 9-9M7 13a6 6 0 0 1 6-6M10 13a3 3 0 0 1 3-3" fill="none" stroke="#ccc"/></svg>
      <svg class="tz6" width="16" height="14" viewBox="0 0 16 14"><path d="M1 5h3l4-4v12L4 9H1z" fill="none" stroke="#fff"/><path d="M10 4q2 3 0 6M12 2q4 5 0 10" fill="none" stroke="#999"/></svg>
      <svg class="tz7" width="23" height="16" viewBox="0 0 23 16"><rect x=".5" y=".5" width="22" height="15" fill="none" stroke="#fff"/><path d="M3 4h17M3 7h17M6 11h11" stroke="#fff" stroke-dasharray="1.500 1"/></svg>
      <span class="tz8">A</span>
      <svg class="tz9" width="16" height="18" viewBox="0 0 16 18"><path d="M1 3l13-2 2 13-13 3z" fill="#f1501f"/><text x="4" y="14" font-size="12" font-weight="700" font-family="DejaVu Sans" fill="#fff">S</text></svg>
      <div class="clock"><span>9:21</span><span>2018/7/19</span></div>
      <svg class="tz10" width="16" height="16" viewBox="0 0 16 16"><path d="M1 1h14v11H10l-2 3-2-3H1z" fill="none" stroke="#fff"/></svg>
    </div>
  </div>
</div>

<style>
  :global(body) { margin: 0; background: #f0f0f0; }
  .app { position: relative; width: 1366px; height: 768px; overflow: hidden; background: #f0f0f0; font: 12px/14px "Noto Sans CJK SC", "Liberation Sans", sans-serif; color: #111; }
  i { display: block; font-style: normal; }
  .ico { flex: none; display: block; }
  .a { font: 10px "DejaVu Sans Mono", monospace; }

  .title { height: 23px; background: #fff; display: flex; align-items: center; padding-left: 3px; }
  .appico { margin-right: 4px; }
  .ttext { font-size: 12.2px; white-space: nowrap; }
  .t2 { letter-spacing: .7px; }
  .t3 { letter-spacing: .24px; }
  .winbtns { position: absolute; right: 19px; top: 5px; display: flex; gap: 34px; }

  .ime { position: absolute; left: 968px; top: 0; height: 27px; display: flex; z-index: 5; }
  .ime-s { z-index: 1; }
  .ime-bar { width: 178px; height: 23px; margin: 3px 0 0 0; background: #fff; border: 1px solid #b7c8d8; display: flex; align-items: center; gap: 6px; padding-left: 5px; box-sizing: border-box; }
  .ime-a { color: #2a7fd0; font: 700 17px "Liberation Sans", sans-serif; width: 12px; flex: none; }
  .ime-bar svg { flex: none; }
  .ime-dot { margin-left: 4px; }
  .ime-smile { margin-left: 3px; }

  .menu { height: 29px; background: #f5f6f7; display: flex; align-items: center; padding-left: 7px; white-space: nowrap; }
  .m { flex: none; }
  .w43 { width: 43px; } .w48 { width: 48px; } .w49 { width: 49px; } .w50 { width: 50px; } .w51 { width: 51px; } .w52 { width: 52px; } .w54 { width: 54px; } .w57 { width: 57px; } .w61 { width: 61px; } .w64 { width: 64px; } .w70 { width: 70px; } .w73 { width: 73px; }
  .mico { position: relative; width: 19px; height: 16px; flex: none; }
  .gem { position: absolute; left: 7px; top: 9px; }
  .mcar { margin-right: 6px; }
  .qq { margin-right: 3px; }
  .qbox { width: 158px; margin-left: 0; padding-left: 29px; height: 28px; line-height: 28px; background: linear-gradient(#fbfcfc, #f0f1f2); color: #0d5a6a; border-radius: 3px 3px 0 0; flex: none; box-sizing: content-box; }
  .uico { margin-left: 6px; margin-right: 4px; }
  .phone { font-size: 12.4px; width: 79px; flex: none; }
  .pcar { margin: 0 7px 0 5px; }
  .bean { width: 56px; flex: none; }
  .mmore { position: absolute; left: 1353px; top: 28px; }
  .more { font: 700 12px/12px "Liberation Sans", sans-serif; color: #111; }

  .row { display: flex; }
  .r-main { padding-top: 1px; box-sizing: content-box; height: 28px; padding-bottom: 3px; }
  .grp { display: flex; align-items: center; background: #f9f9f9; border-radius: 2px; flex: none; }
  .it { flex: none; display: flex; align-items: center; gap: 5px; height: 100%; box-sizing: border-box; white-space: nowrap; overflow: hidden; }
  .it.dim { color: #a8a8a8; }
  .it.wh { background: #fff; }
  .it.on { border: 1px solid #2f8fd6; background: #e3eef8; padding-left: 2px; height: 24px; max-height: 100%; }
  .it .lb { flex: none; }
  .slot { flex: none; display: flex; align-items: center; height: 100%; }
  .slot.more { align-items: flex-start; padding-top: 3px; box-sizing: border-box; }
  .sep { width: 1px; height: 18px; background: #bdbdbd; }
  .car { width: 0; height: 0; border: 3px solid transparent; border-top: 3.5px solid #111; border-bottom: 0; }
  .dots { width: 2px; height: 16px; background: repeating-linear-gradient(#aaa 0 2px, transparent 2px 4px); }
  .combo { display: flex; align-items: center; height: 100%; box-sizing: border-box; background: #fff; padding-left: 2px; white-space: nowrap; flex: none; }

  .body { height: 622px; display: flex; }
  .left { width: 212px; flex: none; }
  .lhead { height: 16px; background: #0b57d8; color: #fff; display: flex; justify-content: space-between; align-items: center; padding: 0 4px 0 0; font-size: 13px; line-height: 16px; }
  .pin { display: flex; align-items: center; gap: 10px; }
  .lbtn { height: 21px; margin-top: 1px; background: #f0f0f0; border: 1px solid #a0a0a0; box-sizing: border-box; text-align: center; line-height: 20px; width: 212px; }
  .lbtn.b1 { margin-top: 2px; }
  .tree { margin-top: 1px; height: 515px; box-sizing: border-box; border: 1px solid #9c9c9c; border-width: 1px 2px 2px; background: #fff; display: flex; flex-direction: column; }
  .tools { height: 25px; flex: none; display: flex; align-items: center; gap: 3px; padding-left: 5px; background: #fff; }
  .tscroll { flex: 1; min-height: 0; display: flex; overflow: hidden; }
  .tlist { width: 191px; overflow: hidden; padding-top: 2px; }
  .tr { height: 16px; display: flex; align-items: center; position: relative; white-space: nowrap; }
  .tr.l1 { padding-left: 24px; }
  .tr.l2 { padding-left: 44px; }
  .tr.selrow { background: linear-gradient(#d9d9d9, #d9d9d9) 41px 0/88px 100% no-repeat; }
  .chev { position: absolute; left: 9px; top: 5px; width: 5px; height: 5px; border: solid #a0a0a0; border-width: 2px 2px 0 0; transform: rotate(45deg); }
  .chev.down { border-color: #444; transform: rotate(135deg); left: 10px; top: 3px; }
  .tr .hd { position: absolute; border-top: 1px dotted #777; top: 8px; }
  .tr.l1 .hd { left: 20px; width: 4px; }
  .tr.l2 .hd { left: 33px; width: 10px; }
  .vl { position: absolute; left: 33px; top: 0; height: 16px; border-left: 1px dotted #777; }
  .vl.end { height: 8px; }
  .tl { margin-left: 4px; }
  .nb { margin-left: 3px; }
  .newtag { background: #ffe000; color: #111; font: 9px/9px "Liberation Sans", sans-serif; padding: 0 1px; margin: -6px 0 0 1px; }
  .vs { width: 17px; background: #f0f0f0; flex: none; position: relative; display: flex; flex-direction: column; align-items: center; }
  .up, .dn, .lf, .rt { flex: none; width: 5px; height: 5px; border: solid #555; border-width: 2px 0 0 2px; }
  .up { transform: rotate(45deg); margin-top: 7px; }
  .dn { transform: rotate(225deg); margin-bottom: 7px; }
  .lf { transform: rotate(-45deg); margin-left: 6px; }
  .rt { transform: rotate(135deg); margin-right: 7px; }
  .vthumb { width: 100%; height: 386px; margin-top: 27px; background: #cdcdcd; flex: none; }
  .vs .dn { margin-top: auto; }

  .right { flex: 1; padding-left: 5px; min-width: 0; display: flex; flex-direction: column; }
  .r-edit { height: 18px; margin-top: 3px; }
  .r-attr { height: 25px; margin-top: 7px; }
  .r-draw { height: 23px; margin-top: 3px; }
  .view { position: relative; height: 312px; margin-top: 5px; background: #000; flex: none; }
  .scene { display: block; }
  .bub { font: 700 15px "DejaVu Sans Mono", monospace; fill: #b0b0b0; }
  .ctrl { position: absolute; left: 10px; top: 3px; width: 166px; height: 177px; box-sizing: border-box; background: #fff; border: 2px solid #7d7d7d; }
  .ctitle { height: 30px; color: #9a9a9a; line-height: 26px; padding-left: 7px; }
  .cbox { height: 144px; border: 1px solid #8f8f8f; border-right: 0; border-bottom: 0; box-sizing: border-box; }
  .cr { height: 12px; display: flex; align-items: center; padding-left: 4px; gap: 3px; color: #111; line-height: 12px; white-space: nowrap; }
  .ck { width: 11px; height: 11px; border: 1px solid #999; box-sizing: border-box; position: relative; flex: none; }
  .ck svg { position: absolute; left: -1px; top: -1px; }

  .r-snap { height: 24px; margin-top: 3px; }
  .g3 { margin-left: 3px; width: 408px; white-space: nowrap; }
  .d3 { margin-left: 2px; flex: none; }
  .c3 { width: 46px; margin-left: 3px; height: 100%; }
  .c3c { margin-left: 2px; flex: none; }
  .s3 { margin: 0 2px 0 8px; flex: none; }
  .lab { flex: none; }
  .dimt { color: #888; width: 19px; }
  .num { flex: none; height: 22px; box-sizing: border-box; border: 1px solid #767676; background: #fff; display: flex; align-items: center; justify-content: flex-end; color: #888; position: relative; }
  .n1 { width: 59px; padding-right: 20px; } .n2 { width: 59px; padding-right: 21px; } .n3 { width: 68px; padding-right: 18px; }
  .spin { position: absolute; right: 3px; top: 3px; width: 8px; height: 14px; background:
    linear-gradient(45deg, transparent 50%, #555 50%) 0 0/4px 4px no-repeat,
    linear-gradient(-45deg, transparent 50%, #555 50%) 4px 0/4px 4px no-repeat,
    linear-gradient(135deg, transparent 50%, #555 50%) 0 10px/4px 4px no-repeat,
    linear-gradient(-135deg, transparent 50%, #555 50%) 4px 10px/4px 4px no-repeat; }
  .unit { color: #666; margin-left: 2px; width: 24px; }
  .unit2 { color: #666; width: 19px; }
  .s4 { margin: 0 4px 0 0; flex: none; }
  .chk { width: 10px; height: 10px; border: 1px solid #888; background: #fff; flex: none; box-sizing: border-box; }
  .rotl { margin: 0 5px 0 8px; flex: none; }
  .deg { margin-left: 2px; color: #555; }

  .lower { flex: 1; display: flex; margin-top: 8px; min-height: 0; }
  .gutter { width: 15px; flex: none; display: flex; flex-direction: column; align-items: center; padding: 0 3px 0 0; box-sizing: border-box; }
  .gdots { width: 8px; height: 178px; margin-top: 3px; background: radial-gradient(circle, #c2c2c2 1px, transparent 1.2px) 0 0/4px 4px; }
  .lmain { flex: 1; min-width: 0; display: flex; flex-direction: column; }
  .r-tbl { height: 23px; }
  .r-tbl .grp { margin-left: 0 !important; }
  .tbl { margin-top: 2px; height: 165px; width: 1136px; margin-left: -3px; box-sizing: border-box; border: 1px solid #a5a5a5; border-width: 1px 1px 2px 1px; background: #fff; display: grid; grid-template: 146px 16px / 1116px 18px; }
  .grid-wrap { position: relative; overflow: hidden; height: 146px; }
  .grid { display: grid; grid-template-columns: 33px 73px 57px 35px 33px 201.5px 166px 156.5px 61px 38px 39px 49px 61px 61px 53px; width: 1118px; }
  .grid.hd { height: 20px; }
  .hc { background: linear-gradient(#fff, #f0f0f0); border-right: 1px solid #bbb; border-bottom: 1px solid #bbb; box-sizing: border-box; text-align: center; line-height: 19px; white-space: nowrap; overflow: hidden; }
  .hc.hs { background: linear-gradient(#ffd98f, #f8c36e); color: #7a008a; }
  .r1 { height: 61px; } .r2 { height: 29px; } .r3 { height: 60px; }
  .td { background: #ccffd6; border-right: 1px solid #bbb; border-bottom: 1px solid #bbb; box-sizing: border-box; display: flex; align-items: center; padding-left: 3px; white-space: nowrap; overflow: hidden; gap: 0; }
  .td.sel { background: #aee9d6; }
  .td.rh { background: linear-gradient(#fff, #f6f6f6); justify-content: center; padding: 0; }
  .td.rha { background: #ffd28a; color: #7a008a; }
  .td.fc { border-left: 1px solid #000; }
  .td.ct { justify-content: center; padding: 0; font-size: 10px; }
  .shape { position: absolute; left: 232px; top: 0; overflow: visible; pointer-events: none; }
  .sh text { font: 10.500px "Liberation Sans", sans-serif; fill: #111; }
  .tvs { background: #f0f0f0; display: flex; flex-direction: column; align-items: center; }
  .tthumb { width: 100%; height: 17px; background: #cdcdcd; margin-top: 6px; flex: none; }
  .tvs .up { margin-top: 7px; }
  .tvs .dn { margin-top: auto; }
  .ths { grid-column: 1 / -1; background: #f0f0f0; display: flex; align-items: center; }
  .hthumb { width: 718px; height: 100%; margin-left: 7px; background: #cdcdcd; }
  .ths .rt { margin-left: auto; margin-right: 26px; }

  .status { height: 22px; display: flex; gap: 3px; padding-top: 1px; box-sizing: border-box; }
  .st { height: 20px; background: #f7f7f7; border: 1px solid #dedede; box-sizing: border-box; padding-left: 2px; line-height: 18px; white-space: nowrap; }
  .s1 { width: 147px; } .s2 { width: 77px; } .s3x { width: 97px; } .s4x { width: 47px; } .s5 { width: 913px; } .s6 { width: 70px; }
  .st:not(.s2):not(.s3x) { font-size: 10px; }

  .task { height: 40px; background: #07151b; display: flex; color: #ddd; position: relative; }
  .start { width: 48px; background: #000; display: flex; align-items: center; justify-content: center; }
  .search { width: 344px; background: #333; display: flex; align-items: center; padding-left: 9px; box-sizing: border-box; color: #9d9d9d; font-size: 14px; }
  .search span { margin-left: 5px; font-size: 14px; }
  .mic { margin-left: 118px; }
  .tasks { width: 498px; display: flex; }
  .tk { width: 50px; height: 40px; display: flex; align-items: center; justify-content: center; position: relative; box-sizing: border-box; flex: none; }
  .k1 { width: 46px; }
  .k2 { width: 52px; margin-left: 2px; }
  .k8 { width: 43px; margin-left: 6px; }
  .k9 { width: 41px; margin-left: 7px; }
  .k10 { width: 48px; margin-left: 4px; }
  .act { background: #2b3a40; }
  .ul { box-shadow: inset 0 -3px 0 #6cb0e8; }
  .eico { font: 700 29px/28px "DejaVu Sans", sans-serif; color: #e6e6e6; }
  .edge { color: #1a7fe0; }
  .ie { color: #2f9be8; }
  .ring { position: absolute; left: 12px; top: 7px; }
  .tray { flex: 1; position: relative; }
  .tray > * { position: absolute; }
  .tz1 { left: 33px; top: 13px; }
  .cpu { left: 78px; top: 2px; display: flex; flex-direction: column; align-items: center; gap: 3px; width: 48px; color: #ccc; }
  .tz2 { left: 144px; top: 14px; } .tz3 { left: 169px; top: 11px; } .tz4 { left: 193px; top: 12px; } .tz5 { left: 218px; top: 12px; } .tz6 { left: 240px; top: 13px; } .tz7 { left: 264px; top: 12px; }
  .tz8 { left: 296px; top: 8px; font: 22px "Liberation Sans", sans-serif; color: #fff; }
  .tz9 { left: 324px; top: 11px; }
  .clock { left: 356px; top: 2px; width: 60px; display: flex; flex-direction: column; align-items: center; gap: 3px; color: #ddd; }
  .tz10 { left: 436px; top: 13px; }
</style>
